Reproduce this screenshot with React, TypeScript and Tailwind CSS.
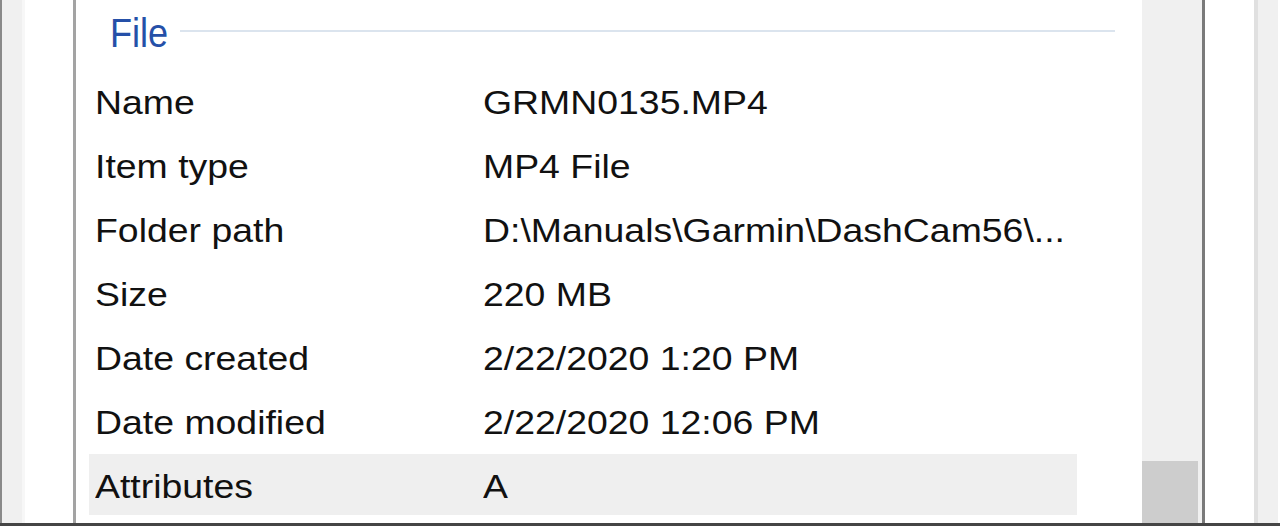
import React from "react";

const rows: [string, string][] = [
  ["Name", "GRMN0135.MP4"],
  ["Item type", "MP4 File"],
  ["Folder path", "D:\\Manuals\\Garmin\\DashCam56\\..."],
  ["Size", "220 MB"],
  ["Date created", "2/22/2020 1:20 PM"],
  ["Date modified", "2/22/2020 12:06 PM"],
  ["Attributes", "A"],
];

export default function App() {
  return (
    <div
      className="w-[1280px] h-[526px] overflow-hidden bg-white flex flex-col"
      style={{ fontFamily: '"Liberation Sans", Arial, sans-serif' }}
    >
      <div className="flex h-[523px]">
        <div className="w-[2px] bg-[#8a8a8a]" />
        <div className="w-[20px] bg-[#f0f0f0]" />
        <div className="w-[3px] bg-[#f7f7f7]" />
        <div className="w-[48px] bg-white" />
        <div className="w-[3px] bg-[#a3a3a3]" />
        {/* main panel */}
        <div className="w-[1066px] bg-white flex flex-col">
          <div className="h-[70px] relative">
            <div className="absolute left-[34px] top-[9px] text-[41px] leading-[48px] text-[#2550a8] scale-x-[0.88] origin-left">
              File
            </div>
            <div className="absolute left-[104px] top-[30px] w-[935px] h-[2px] bg-[#dbe4ee]" />
          </div>
          <div className="flex flex-col gap-[3px] pl-[13px]">
            {rows.map(([k, v], i) => (
              <div
                key={k}
                className={`flex items-center h-[61px] w-[988px] pt-[3px] ${
                  i === rows.length - 1 ? "bg-[#efefef]" : ""
                }`}
              >
                <div className="w-[394px] pl-[6px] text-[34px] leading-none text-[#111]">
                  <span className="inline-block scale-x-[1.1] origin-left whitespace-nowrap">{k}</span>
                </div>
                <div className="text-[34px] leading-none text-[#111]">
                  <span className="inline-block scale-x-[1.1] origin-left whitespace-nowrap">{v}</span>
                </div>
              </div>
            ))}
          </div>
        </div>
        {/* scrollbar */}
        <div className="w-[60px] bg-[#f0f0f0] flex flex-col justify-end">
          <div className="w-[56px] h-[62px] bg-[#cdcdcd]" />
        </div>
        <div className="w-[3px] bg-[#7a7a7a]" />
        <div className="w-[49px] bg-white" />
        <div className="w-[4px] bg-[#e0e0e0]" />
        <div className="w-[20px] bg-[#f0f0f0]" />
        <div className="w-[2px] bg-white" />
      </div>
      <div className="h-[3px] bg-[#454545]" />
    </div>
  );
}
